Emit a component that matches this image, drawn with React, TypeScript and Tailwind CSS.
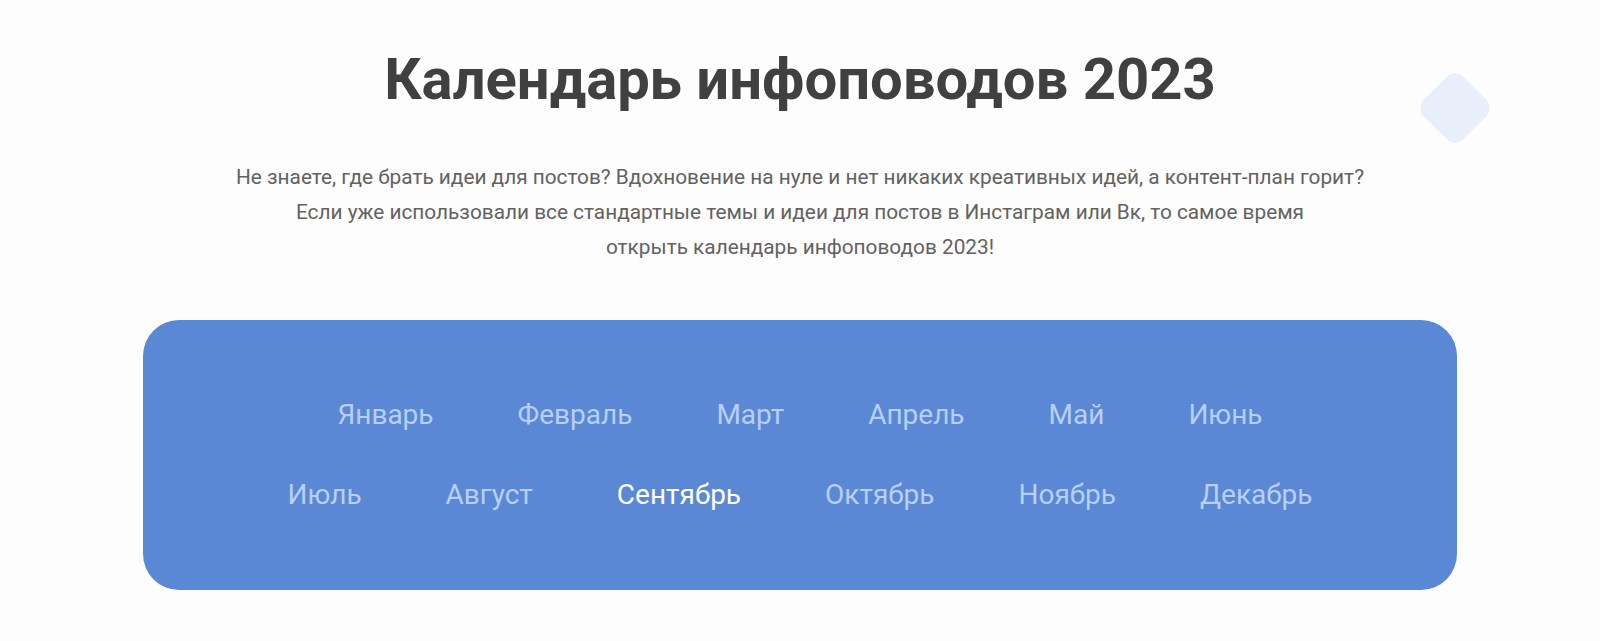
import React from 'react';

const rows: string[][] = [
  ['Январь', 'Февраль', 'Март', 'Апрель', 'Май', 'Июнь'],
  ['Июль', 'Август', 'Сентябрь', 'Октябрь', 'Ноябрь', 'Декабрь'],
];

const ACTIVE = 'Сентябрь';

const App: React.FC = () => {
  return (
    <div className="relative min-h-[641px] w-full bg-[#fdfdfd] font-['Roboto',sans-serif]">
      {/* decorative diamond */}
      <div className="absolute left-[1427px] top-[80px] h-[56px] w-[56px] rotate-45 rounded-[12px] bg-[#e8eefa]" />

      <div className="flex flex-col items-center pt-[43px]">
        <h1 className="text-[58px] font-bold leading-[72px] text-[#404040]">
          Календарь инфоповодов 2023
        </h1>

        <p className="mt-[45px] text-center text-[20.8px] leading-[35px] text-[#626262]">
          <span className="block">
            Не знаете, где брать идеи для постов? Вдохновение на нуле и нет никаких креативных идей, а контент-план горит?
          </span>
          <span className="block">
            Если уже использовали все стандартные темы и идеи для постов в Инстаграм или Вк, то самое время
          </span>
          <span className="block">открыть календарь инфоповодов 2023!</span>
        </p>

        <div className="mt-[55px] flex w-[1314px] flex-col items-center gap-y-[47px] rounded-[36px] bg-[#5b88d4] pt-[78px] pb-[79px]">
          {rows.map((row, i) => (
            <div key={i} className="flex items-center justify-center gap-x-[84px]">
              {row.map((m) => (
                <span
                  key={m}
                  className={`text-[28px] leading-[33px] ${m === ACTIVE ? 'text-white' : 'text-[#b7cff6]'}`}
                >
                  {m}
                </span>
              ))}
            </div>
          ))}
        </div>
      </div>
    </div>
  );
};

export default App;
